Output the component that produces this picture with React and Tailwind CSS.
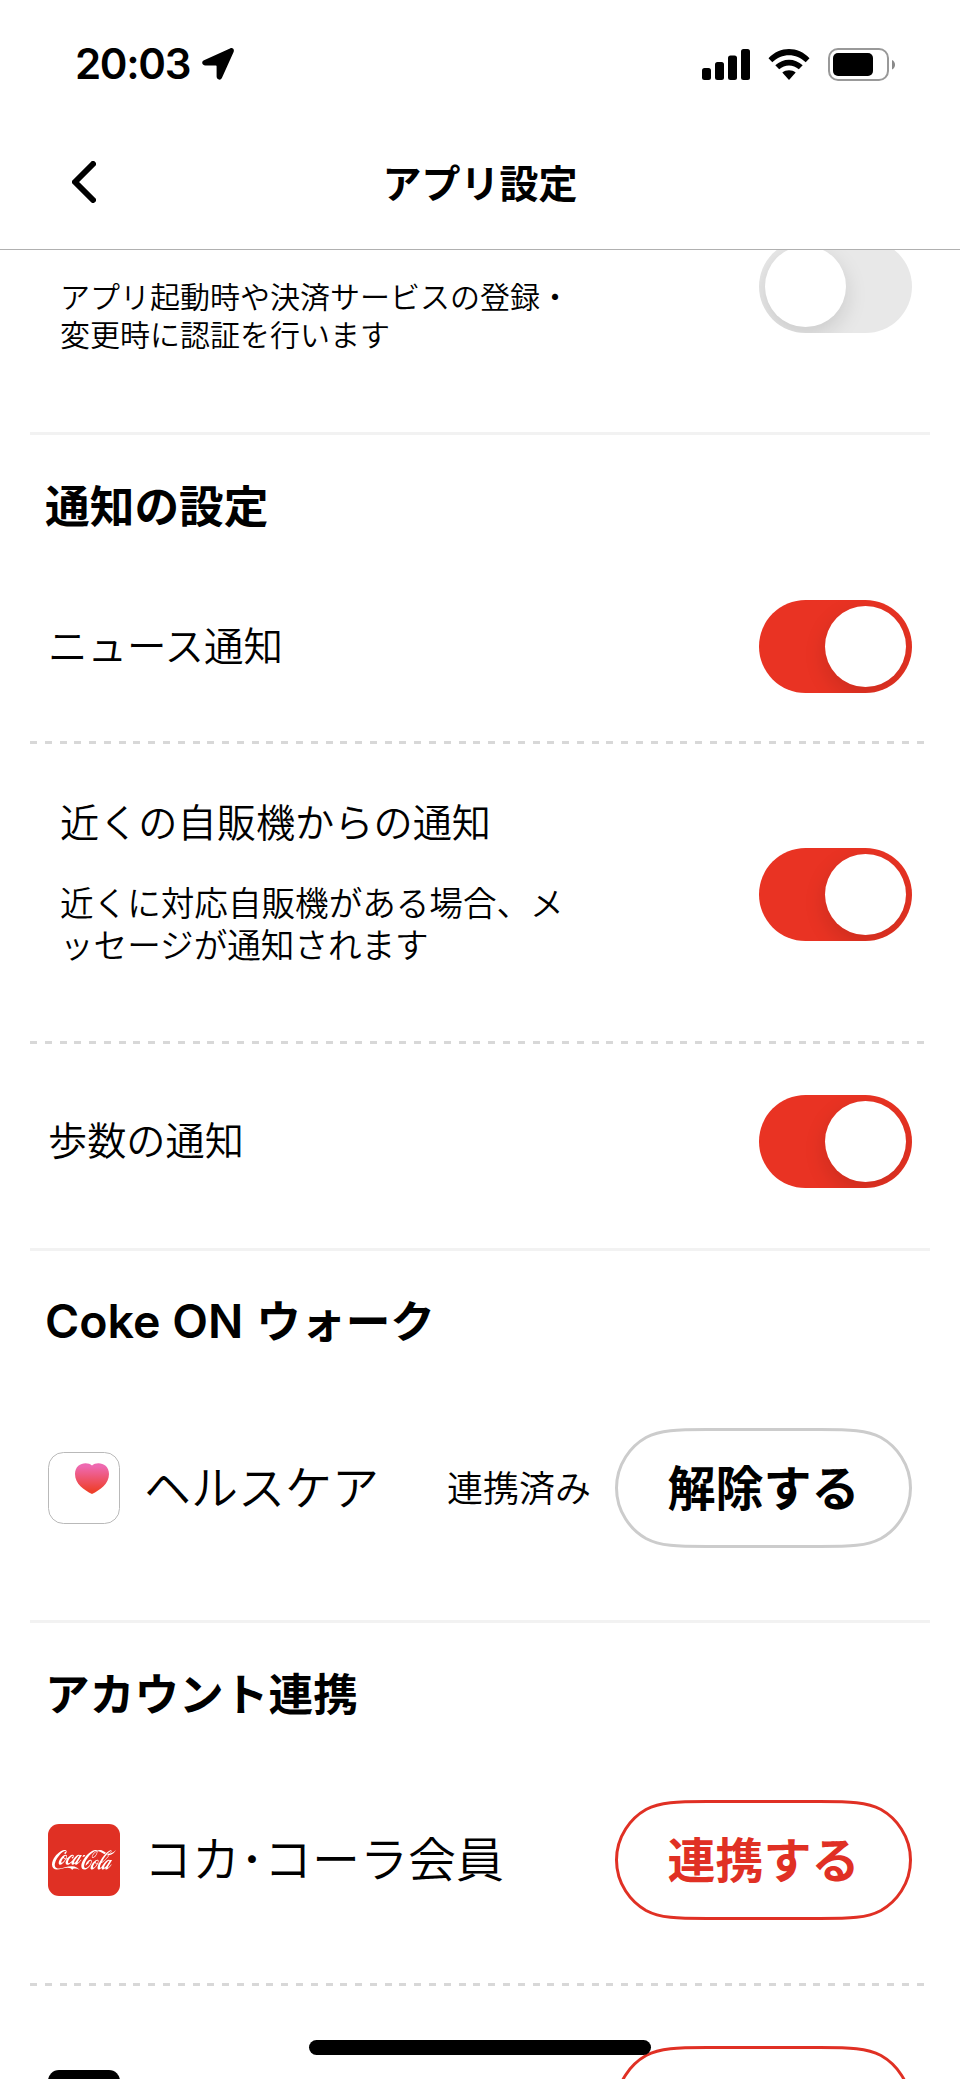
import React, { useState } from "react";
import { SiCocacola } from "react-icons/si";

const Toggle = ({ defaultOn = true }) => {
  const [on, setOn] = useState(defaultOn);

  return (
    <button
      type="button"
      role="switch"
      aria-checked={on}
      onClick={() => setOn(!on)}
      className={`flex h-[93px] w-[153px] shrink-0 overflow-hidden rounded-full p-1.5 ${
        on ? "justify-end bg-[#e93323]" : "justify-start bg-[#e8e8e8]"
      }`}
    >
      <span className="size-[81px] rounded-full bg-white shadow-[0_8px_22px_rgba(0,0,0,0.13)]" />
    </button>
  );
};

const PillButton = ({ children, className }) => (
  <button
    type="button"
    className={`relative flex h-[120px] w-[297px] shrink-0 items-center justify-center text-5xl font-bold ${className}`}
  >
    <svg
      className="absolute inset-0"
      width="297"
      height="120"
      viewBox="0 0 297 120"
      fill="none"
      stroke="currentColor"
      strokeWidth="3"
    >
      <path d="M92 1.5H205C235 1.5 252 2 266 9.5C281 18 295.5 36 295.5 60C295.5 84 281 102 266 110.5C252 118 235 118.5 205 118.5H92C62 118.5 45 118 31 110.5C16 102 1.5 84 1.5 60C1.5 36 16 18 31 9.5C45 2 62 1.5 92 1.5Z" />
    </svg>
    {children}
  </button>
);

const Divider = () => <div className="h-[3px] shrink-0 bg-[#f2f2f2]" />;

const DashedDivider = () => (
  <div className="mr-1.5 h-[3px] shrink-0 bg-[repeating-linear-gradient(to_right,#d8d8d8_0_7px,transparent_7px_14.78px)]" />
);

const SectionTitle = ({ children }) => (
  <h2 className="flex h-[117px] shrink-0 items-center pt-[21px] pl-[15px] text-[44.7px] leading-none font-bold">
    {children}
  </h2>
);

const StatusBar = () => (
  <div className="flex h-32 items-center justify-between pr-[65px] pl-[75px]">
    <div className="flex items-center gap-3">
      <span className="font-[Inter] text-[42px] leading-none font-semibold tracking-[-1.3px]">
        20:03
      </span>
      <svg width="32" height="32" viewBox="0 0 32 32">
        <path
          d="M2 12.2L28 0.4C30.8 -0.6 32.6 1.2 31.6 4L20 29.8C18.8 32.8 14.6 32 14.6 28.6V18.6C14.6 17.6 14.4 17.4 13.4 17.4H3.4C0 17.4 -1 13.6 2 12.2Z"
          fill="black"
        />
      </svg>
    </div>
    <div className="flex items-center">
      <svg width="48" height="31" viewBox="0 0 48 31">
        <rect x="0" y="19" width="9" height="12" rx="2.5" />
        <rect x="13" y="13" width="9" height="18" rx="2.5" />
        <rect x="26" y="6.5" width="9" height="24.5" rx="2.5" />
        <rect x="39" y="0" width="9" height="31" rx="2.5" />
      </svg>
      <svg className="ml-[18px]" width="42" height="31" viewBox="0 0 42 31">
        <path d="M0.5 9.2C12 -3 30 -3 41.5 9.2L37.7 13.2C28.3 3.8 13.7 3.8 4.3 13.2Z" />
        <path d="M7.3 16.3C15 8.8 27 8.8 34.7 16.3L30.8 20.3C25.3 15.2 16.7 15.2 11.2 20.3Z" />
        <path d="M14.3 23.6C18 20.6 24 20.6 27.7 23.6L21 31Z" />
      </svg>
      <svg className="ml-[18px]" width="67" height="33" viewBox="0 0 67 33">
        <rect
          x="1"
          y="1"
          width="59"
          height="31"
          rx="9"
          fill="none"
          stroke="#999999"
          strokeWidth="2"
        />
        <rect x="5" y="5" width="40" height="23" rx="5" />
        <path d="M64 12C68 13.5 68 20 64 21.5Z" fill="#8a8a8a" />
      </svg>
    </div>
  </div>
);

const HealthIcon = () => (
  <svg className="shrink-0" width="72" height="72" viewBox="0 0 72 72">
    <defs>
      <linearGradient id="heart" x1="0" y1="0" x2="0" y2="1">
        <stop offset="0.1" stopColor="#ee69b0" />
        <stop offset="0.9" stopColor="#ee3f2c" />
      </linearGradient>
    </defs>
    <rect
      x="0.5"
      y="0.5"
      width="71"
      height="71"
      rx="15"
      fill="white"
      stroke="#b9b9b9"
    />
    <path
      d="M44 13.5C39 9 27 11 27 22C27 32 36 38 44 42C52 38 61 32 61 22C61 11 49 9 44 13.5Z"
      fill="url(#heart)"
    />
  </svg>
);

export default function App() {
  return (
    <div className="relative flex h-[2079px] w-[960px] flex-col overflow-hidden bg-white font-['Noto_Sans_CJK_JP',sans-serif] text-black">
      <header className="z-10 h-[250px] shrink-0 border-b border-[#b0b0b0] bg-white">
        <StatusBar />
        <div className="flex h-[108px] items-center px-[72px]">
          <svg
            width="24"
            height="42"
            viewBox="0 0 24 42"
            fill="none"
            stroke="black"
            strokeWidth="6"
            strokeLinecap="round"
            strokeLinejoin="round"
          >
            <path d="M21 3L3 21L21 39" />
          </svg>
          <h1 className="-mt-0.5 flex-1 pr-6 text-center text-[39px] leading-none font-bold">
            アプリ設定
          </h1>
        </div>
      </header>

      <main className="flex flex-1 flex-col px-[30px]">
        <div className="flex h-[182px] shrink-0 justify-between pr-[18px] pl-[30px]">
          <p className="pt-[26px] text-[30px] leading-[38px] font-[350]">
            アプリ起動時や決済サービスの登録・
            <br />
            変更時に認証を行います
          </p>
          <div className="-mt-2.5">
            <Toggle defaultOn={false} />
          </div>
        </div>
        <Divider />

        <SectionTitle>通知の設定</SectionTitle>
        <div className="flex h-[189px] shrink-0 items-center justify-between pr-[18px] pl-[18px]">
          <p className="-mt-1.5 text-[39.5px] leading-none font-[350]">
            ニュース通知
          </p>
          <Toggle />
        </div>
        <DashedDivider />
        <div className="flex h-[297px] shrink-0 items-center justify-between pt-1 pr-[18px] pl-[30px]">
          <div className="-mt-[34px]">
            <p className="text-[39.2px] leading-[60px] font-[350]">
              近くの自販機からの通知
            </p>
            <p className="mt-[31px] text-[33.6px] leading-[42px] font-[350]">
              近くに対応自販機がある場合、メ
              <br />
              ッセージが通知されます
            </p>
          </div>
          <Toggle />
        </div>
        <DashedDivider />
        <div className="flex h-[204px] shrink-0 items-center justify-between pr-[18px] pb-[9px] pl-[18px]">
          <p className="-mt-1.5 text-[39.2px] leading-none font-[350]">
            歩数の通知
          </p>
          <Toggle />
        </div>
        <Divider />

        <SectionTitle>
          <span className="flex items-baseline gap-[13px] pt-0.5">
            <span className="font-[Inter] text-[46.5px] font-semibold">
              Coke ON
            </span>
            <span>ウォーク</span>
          </span>
        </SectionTitle>
        <div className="flex h-[252px] shrink-0 items-center pr-[18px] pb-3 pl-[18px]">
          <HealthIcon />
          <p className="-mt-2 ml-6 flex-1 text-[47px] leading-none font-[350]">
            ヘルスケア
          </p>
          <p className="-mt-1 mr-6 text-4xl leading-none font-[350]">
            連携済み
          </p>
          <PillButton className="text-[#cccccc]">
            <span className="-mt-1.5 text-black">解除する</span>
          </PillButton>
        </div>
        <Divider />

        <SectionTitle>アカウント連携</SectionTitle>
        <div className="flex h-[243px] shrink-0 items-center pr-[18px] pb-[3px] pl-[18px]">
          <div className="flex size-[72px] items-center justify-center rounded-[11px] bg-[#e03024]">
            <SiCocacola className="size-16 text-white" />
          </div>
          <p className="-mt-2 ml-6 flex-1 text-5xl leading-none font-[350]">
            コカ･コーラ会員
          </p>
          <PillButton className="text-[#e03024]">
            <span className="-mt-1.5">連携する</span>
          </PillButton>
        </div>
        <DashedDivider />
        <div className="flex h-[240px] shrink-0 items-center justify-between pr-[18px] pl-[18px]">
          <div className="size-[72px] rounded-[11px] bg-black" />
          <PillButton className="text-[#e03024]" />
        </div>
      </main>

      <div className="absolute bottom-6 left-[309px] h-[15px] w-[342px] rounded-full bg-black" />
    </div>
  );
}
